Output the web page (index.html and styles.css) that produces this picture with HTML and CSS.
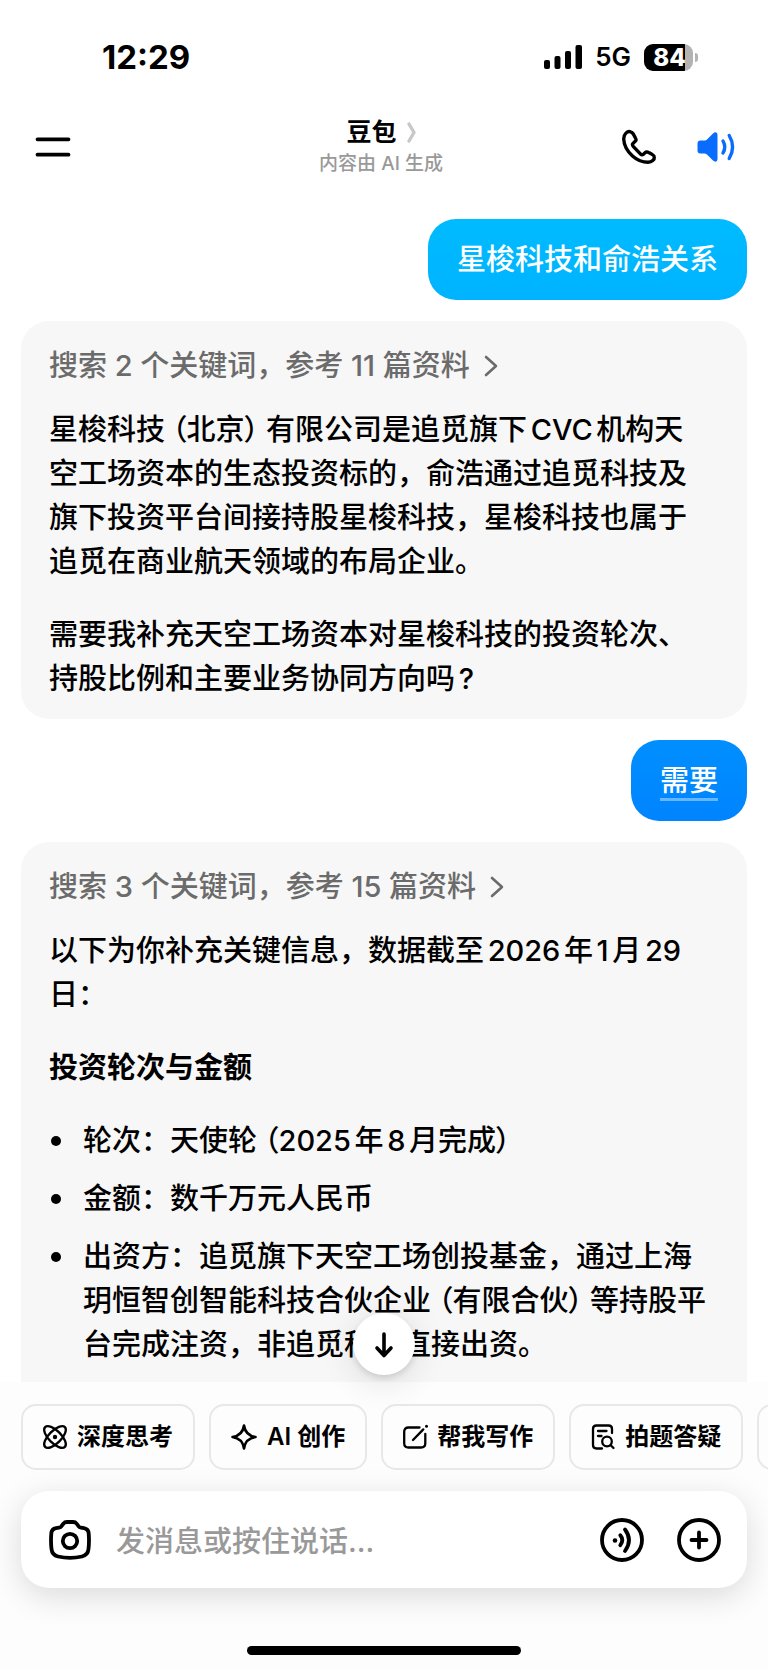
FILE: index.html
```html
<!DOCTYPE html>
<html lang="zh-CN">
<head>
    <meta charset="UTF-8">
    <meta name="viewport" content="width=device-width, initial-scale=1.0">
    <title>豆包</title>
    <link rel="stylesheet" href="styles.css">
</head>
<body>
    <div class="status-bar">
        <span class="time">12:29</span>
        <div class="status-icons">
            <svg width="38" height="24" viewBox="0 0 38 24">
                <rect x="0" y="15" width="6" height="9" rx="2"/>
                <rect x="10.500" y="11" width="6" height="13" rx="2"/>
                <rect x="21" y="6" width="6" height="18" rx="2"/>
                <rect x="31.500" y="0" width="6.500" height="24" rx="2"/>
            </svg>
            <span class="network">5G</span>
            <span class="battery"><span class="battery-level">84</span></span>
        </div>
    </div>

    <header class="header">
        <button class="icon-btn" aria-label="菜单">
            <svg width="36" height="20" viewBox="0 0 36 20" fill="none" stroke="#000" stroke-width="3.800" stroke-linecap="round">
                <path d="M2.500 2.300H33.500M2.500 17.700H33.500"/>
            </svg>
        </button>
        <div class="title">
            <h1>豆包
                <svg width="9" height="21" viewBox="0 0 9 21" fill="none" stroke="#c8c8c8" stroke-width="3.400" stroke-linecap="round" stroke-linejoin="round">
                    <path d="M2 2L7 10.500L2 19"/>
                </svg>
            </h1>
            <p>内容由 AI 生成</p>
        </div>
        <div class="header-actions">
            <button class="icon-btn" aria-label="通话">
                <svg width="34" height="34" viewBox="0 0 34 34" fill="none" stroke="#000" stroke-width="3.400" stroke-linecap="round" stroke-linejoin="round">
                    <path d="M8.500 1.800C5.500 0.800 1.600 4 1.700 9C2 15.500 5.500 21.500 10.500 26C15 30 20.500 32.300 26 32.300C30 32.200 32.600 29.600 32.300 26.900C32.200 25.400 29 23.800 26.500 22.400C25.200 21.600 24 21.800 23 22.800L21.200 24.400C20.300 25 19.500 24.800 18.600 24.100L11.200 16.300C10.400 15.300 10.200 14.300 11 13.400L13.700 10.700C14.300 10 14 8.900 13.300 7.800L11.300 4C10.500 2.700 9.700 2.100 8.500 1.800Z"/>
                </svg>
            </button>
            <button class="icon-btn" aria-label="朗读">
                <svg width="38" height="32" viewBox="0 0 38 32">
                    <path d="M16 2.500C18.300 0.300 20.500 1.500 20.500 4V28C20.500 30.500 18.300 31.700 16 29.500L10.500 24C9.500 23 8.500 22.500 7 22.500H3.500C1.500 22.500 0.500 21.300 0.500 19.500V12.500C0.500 10.700 1.500 9.500 3.500 9.500H7C8.500 9.500 9.500 9 10.500 8Z" fill="#0a6cff"/>
                    <path d="M26 10Q29.500 16 26 22M32.200 4.500Q39 16 32.200 27.500" fill="none" stroke="#0a6cff" stroke-width="3.400" stroke-linecap="round"/>
                </svg>
            </button>
        </div>
    </header>

    <main class="chat">
        <div class="bubble">星梭科技和俞浩关系</div>

        <section class="answer">
            <a class="sources" href="#">搜索 2 个关键词，参考 11 篇资料
                <svg width="14" height="22" viewBox="0 0 14 22" fill="none" stroke="#6b6b6b" stroke-width="2.600" stroke-linecap="round" stroke-linejoin="round">
                    <path d="M2 2L12 11L2 20"/>
                </svg>
            </a>
            <p>星梭科技<span class="paren">（北京）</span>有限公司是追觅旗下CVC机构天<br>空工场资本的生态投资标的，俞浩通过追觅科技及<br>旗下投资平台间接持股星梭科技，星梭科技也属于<br>追觅在商业航天领域的布局企业。</p>
            <p>需要我补充天空工场资本对星梭科技的投资轮次、<br>持股比例和主要业务协同方向吗?</p>
        </section>

        <div class="bubble bubble-deep"><span>需要</span></div>

        <section class="answer answer-open">
            <a class="sources" href="#">搜索 3 个关键词，参考 15 篇资料
                <svg width="14" height="22" viewBox="0 0 14 22" fill="none" stroke="#6b6b6b" stroke-width="2.600" stroke-linecap="round" stroke-linejoin="round">
                    <path d="M2 2L12 11L2 20"/>
                </svg>
            </a>
            <p>以下为你补充关键信息，数据截至2026年1月29<br>日：</p>
            <h2>投资轮次与金额</h2>
            <ul>
                <li>轮次：天使轮<span class="paren">（2025年8月完成）</span></li>
                <li>金额：数千万元人民币</li>
                <li>出资方：追觅旗下天空工场创投基金，通过上海<br>玥恒智创智能科技合伙企业<span class="paren">（有限合伙）</span>等持股平<br>台完成注资，非追觅科技直接出资。</li>
            </ul>
        </section>
    </main>

    <footer class="composer">
        <button class="scroll-down" aria-label="回到底部">
            <svg width="22" height="26" viewBox="0 0 22 26" fill="none" stroke="#000" stroke-width="3.600" stroke-linecap="round" stroke-linejoin="round">
                <path d="M11 3V24M4 17L11 24.500L18 17"/>
            </svg>
        </button>

        <div class="chips">
            <button class="chip">
                <svg width="24" height="24" viewBox="0 0 24 24" fill="none" stroke="#000" stroke-width="2.300">
                    <ellipse cx="12" cy="12" rx="14" ry="6.200" transform="rotate(45 12 12)"/>
                    <ellipse cx="12" cy="12" rx="14" ry="6.200" transform="rotate(-45 12 12)"/>
                    <circle cx="12" cy="12" r="2.200" fill="#000" stroke="none"/>
                </svg>
                深度思考
            </button>
            <button class="chip">
                <svg width="26" height="26" viewBox="0 0 26 26" fill="none" stroke="#000" stroke-width="2.600" stroke-linejoin="round">
                    <path d="M13 1.500C14 8.500 17.500 12 24.500 13C17.500 14 14 17.500 13 24.500C12 17.500 8.500 14 1.500 13C8.500 12 12 8.500 13 1.500Z"/>
                </svg>
                AI 创作
            </button>
            <button class="chip">
                <svg width="24" height="24" viewBox="0 0 24 24" fill="none" stroke="#000" stroke-width="2.300" stroke-linecap="round">
                    <path d="M16.500 2.500H5.500Q1.200 2.500 1.200 6.800V18.200Q1.200 22.500 5.500 22.500H18Q22.300 22.500 22.300 18.200V9"/>
                    <path d="M10 15L20.300 4.400"/>
                    <circle cx="23.500" cy="1.300" r="1.500" fill="#000" stroke="none"/>
                </svg>
                帮我写作
            </button>
            <button class="chip">
                <svg width="24" height="26" viewBox="0 0 24 26" fill="none" stroke="#000" stroke-width="2.300" stroke-linecap="round">
                    <path d="M21 9V5Q21 1.500 17.500 1.500H5.500Q2 1.500 2 5V21Q2 24.500 5.500 24.500H11M7 7H15.500M7 12H10.500"/>
                    <circle cx="16" cy="17.500" r="4.800"/>
                    <path d="M19.700 21.200L22.500 24"/>
                </svg>
                拍题答疑
            </button>
            <button class="chip" aria-label="更多"></button>
        </div>

        <form class="input-bar">
            <button type="button" class="icon-btn" aria-label="拍照">
                <svg width="42" height="40" viewBox="0 0 42 40" fill="none" stroke="#000" stroke-width="3.800" stroke-linejoin="round">
                    <path d="M14.500 3.500C15.300 2.400 16.500 2 18 2H24C25.500 2 26.700 2.400 27.500 3.500L29.500 6.200C30.100 7.100 30.800 7.500 32 7.700L35 8.200C38 8.800 39.500 10.500 39.700 13.500C40.100 18.500 40.100 24 39.500 29C39.100 33 37 35.500 33 36.500C25 38.400 17 38.400 9 36.500C5 35.500 2.900 33 2.500 29C1.900 24 1.900 18.500 2.300 13.500C2.500 10.500 4 8.800 7 8.200L10 7.700C11.200 7.500 11.900 7.100 12.500 6.200Z"/>
                    <circle cx="21" cy="21" r="7.200"/>
                </svg>
            </button>
            <input type="text" aria-label="消息" placeholder="发消息或按住说话...">
            <button type="button" class="icon-btn" aria-label="语音">
                <svg width="44" height="44" viewBox="0 0 44 44" fill="none" stroke="#000" stroke-width="3.800" stroke-linecap="round">
                    <circle cx="22" cy="22" r="20"/>
                    <circle cx="15" cy="22.500" r="2.300" fill="#000" stroke="none"/>
                    <path d="M20.300 17.300Q24.300 22 20.300 27.200M25 11.500Q33 22 25 33"/>
                </svg>
            </button>
            <button type="button" class="icon-btn" aria-label="更多功能">
                <svg width="44" height="44" viewBox="0 0 44 44" fill="none" stroke="#000" stroke-width="3.800" stroke-linecap="round">
                    <circle cx="22" cy="22" r="20"/>
                    <path d="M22 14.500V29.500M14.500 22H29.500"/>
                </svg>
            </button>
        </form>

        <div class="home-indicator"></div>
    </footer>
</body>
</html>
```

FILE: styles.css
```css
* {
    margin: 0;
    padding: 0;
    box-sizing: border-box;
}

body {
    min-height: 100vh;
    display: flex;
    flex-direction: column;
    background: #fff;
    color: #000;
    font-family: Inter, "Noto Sans CJK SC", sans-serif;
    font-size: 29px;
    font-weight: 500;
    line-height: 44px;
    overflow-x: hidden;
}

button {
    border: none;
    background: none;
    font: inherit;
    color: inherit;
    cursor: pointer;
}

svg {
    display: block;
    flex: none;
    overflow: visible;
}

/* status bar */
.status-bar {
    display: flex;
    justify-content: space-between;
    align-items: center;
    height: 114px;
    padding: 0 70px 0 102px;
}

.time {
    font-size: 33px;
    font-weight: 700;
}

.status-icons {
    display: flex;
    align-items: center;
    gap: 13px;
}

.network {
    font-size: 26px;
    font-weight: 600;
}

.battery {
    position: relative;
    width: 49px;
    height: 27px;
    margin-right: 5px;
    border-radius: 9px;
    background: linear-gradient(to right, #000 84%, #b3b3b3 84%);
}

.battery::after {
    content: "";
    position: absolute;
    left: 51px;
    top: 9px;
    width: 3px;
    height: 9px;
    border-radius: 0 4px 4px 0;
    background: #b3b3b3;
}

.battery-level {
    display: block;
    padding-left: 2px;
    text-align: center;
    font-size: 24px;
    font-weight: 800;
    line-height: 27px;
    color: #fff;
}

/* header */
.header {
    display: grid;
    grid-template-columns: 1fr auto 1fr;
    align-items: center;
    height: 66px;
    padding: 0 33px 0 35px;
}

.icon-btn {
    display: flex;
    flex: none;
    justify-self: start;
}

.title {
    padding-right: 8px;
    text-align: center;
}

.title h1 {
    display: flex;
    justify-content: center;
    align-items: center;
    gap: 10px;
    font-size: 25px;
    font-weight: 700;
    line-height: 34px;
}

.title p {
    font-size: 19px;
    line-height: 30px;
    color: #999;
}

.header-actions {
    display: flex;
    justify-content: flex-end;
    align-items: center;
    gap: 41px;
}

/* messages */
.chat {
    flex: 1;
    display: flex;
    flex-direction: column;
    gap: 21px;
    padding: 39px 21px 0;
}

.bubble {
    align-self: flex-end;
    padding: 19px 29px 18px;
    border-radius: 28px;
    background: linear-gradient(#00bbff, #00b3ff);
    color: #fff;
}

.bubble-deep {
    background: linear-gradient(#008fff, #0084ff);
}

.bubble-deep span {
    display: block;
    text-decoration: underline 3px rgba(255, 255, 255, 0.4);
    text-underline-offset: 7px;
}

.answer {
    display: flex;
    flex-direction: column;
    gap: 29px;
    padding: 23px 20px 18px 28px;
    border-radius: 28px;
    background: #f7f7f7;
}

.answer p,
.answer li {
    text-autospace: normal;
}

.answer-open {
    flex: 1;
    padding-bottom: 14px;
    border-radius: 28px 28px 0 0;
}

.sources {
    display: flex;
    align-items: center;
    gap: 14px;
    margin-bottom: -9px;
    color: #6b6b6b;
    text-decoration: none;
}

.paren {
    margin: 0 7px;
    font-feature-settings: "palt";
}

.answer h2 {
    font-size: 29px;
    font-weight: 700;
}

.answer ul {
    display: flex;
    flex-direction: column;
    gap: 14px;
    list-style: none;
}

.answer li {
    position: relative;
    padding-left: 34px;
}

.answer li::before {
    content: "";
    position: absolute;
    left: 2px;
    top: 17px;
    width: 10px;
    height: 10px;
    border-radius: 50%;
    background: #000;
}

/* bottom area */
.composer {
    position: relative;
    padding: 22px 21px 14px;
    background: #fdfdfd;
}

.scroll-down {
    position: absolute;
    left: calc(50% - 31px);
    top: -69px;
    display: flex;
    justify-content: center;
    align-items: center;
    width: 62px;
    height: 62px;
    border-radius: 50%;
    background: #fff;
    box-shadow: 0 3px 6px rgba(0, 0, 0, 0.12), 0 6px 36px rgba(0, 0, 0, 0.12);
}

.chips {
    display: flex;
    gap: 14px;
    margin-right: -21px;
    overflow: hidden;
}

.chip {
    display: flex;
    flex: none;
    align-items: center;
    gap: 10px;
    height: 66px;
    padding: 0 20px;
    border: 2px solid #e8e8e8;
    border-radius: 15px;
    font-size: 24px;
    font-weight: 600;
    white-space: nowrap;
}

.input-bar {
    display: flex;
    align-items: center;
    gap: 33px;
    height: 97px;
    margin-top: 21px;
    padding: 0 26px 0 28px;
    border-radius: 28px;
    background: #fff;
    box-shadow: 0 8px 32px rgba(0, 0, 0, 0.14);
}

.input-bar input {
    flex: 1;
    min-width: 0;
    height: 60px;
    margin-left: -8px;
    padding-top: 4px;
    border: none;
    outline: none;
    background: none;
    font: inherit;
}

.input-bar input::placeholder {
    color: #999;
}

.home-indicator {
    width: 274px;
    height: 9px;
    margin: 58px auto 0;
    border-radius: 5px;
    background: #000;
}
```
